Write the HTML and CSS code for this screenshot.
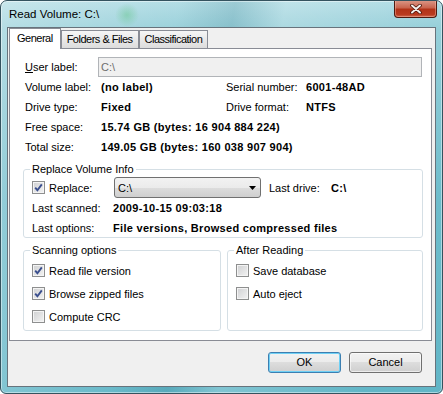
FILE: index.html
```html
<!DOCTYPE html>
<html lang="en">
<head>
    <meta charset="UTF-8">
    <title>Read Volume: C:\</title>
    <link rel="stylesheet" href="styles.css">
</head>
<body>
    <div class="window">
        <div class="titlebar">
            <span class="title">Read Volume: C:\</span>
            <div class="close-btn">
                <svg width="14" height="10" viewBox="0 0 14 10">
                    <path d="M3 1.5 L11 8.5 M11 1.5 L3 8.5" stroke="#4a1309" stroke-width="3.6" stroke-linecap="round"/>
                    <path d="M3 1.5 L11 8.5 M11 1.5 L3 8.5" stroke="#f4f0ee" stroke-width="2" stroke-linecap="round"/>
                </svg>
            </div>
        </div>

        <div class="client">
            <div class="tabs">
                <div class="tab active">General</div>
                <div class="tab">Folders &amp; Files</div>
                <div class="tab">Classification</div>
            </div>

            <div class="panel">
                <div class="info">
                    <span><u>U</u>ser label:</span>
                    <div class="input">C:\</div>

                    <span>Volume label:</span>
                    <span class="b">(no label)</span>
                    <span>Serial number:</span>
                    <span class="b">6001-48AD</span>

                    <span>Drive type:</span>
                    <span class="b">Fixed</span>
                    <span>Drive format:</span>
                    <span class="b">NTFS</span>

                    <span>Free space:</span>
                    <span class="b wide">15.74 GB (bytes: 16 904 884 224)</span>

                    <span>Total size:</span>
                    <span class="b wide">149.05 GB (bytes: 160 038 907 904)</span>
                </div>

                <fieldset class="group">
                    <legend>Replace Volume Info</legend>
                    <div class="replace-grid">
                        <div class="check">
                            <span class="box checked"><svg width="11" height="11" viewBox="0 0 11 11"><path d="M2.2 5.6 L4.4 8.2 L8.8 2.4" fill="none" stroke="#3b4f8e" stroke-width="1.9"/></svg></span>
                            <span>Replace:</span>
                        </div>
                        <div class="combo">
                            <span>C:\</span>
                            <svg width="7" height="4" viewBox="0 0 7 4"><path d="M0 0 H7 L3.5 4 Z" fill="#000"/></svg>
                        </div>
                        <span class="pad-left">Last drive:</span>
                        <span class="b">C:\</span>

                        <span>Last scanned:</span>
                        <span class="b span">2009-10-15 09:03:18</span>

                        <span>Last options:</span>
                        <span class="b span">File versions, Browsed compressed files</span>
                    </div>
                </fieldset>

                <div class="options">
                    <fieldset class="group">
                        <legend>Scanning options</legend>
                        <div class="opt-list">
                            <div class="check">
                                <span class="box checked"><svg width="11" height="11" viewBox="0 0 11 11"><path d="M2.2 5.6 L4.4 8.2 L8.8 2.4" fill="none" stroke="#3b4f8e" stroke-width="1.9"/></svg></span>
                                <span>Read file version</span>
                            </div>
                            <div class="check">
                                <span class="box checked"><svg width="11" height="11" viewBox="0 0 11 11"><path d="M2.2 5.6 L4.4 8.2 L8.8 2.4" fill="none" stroke="#3b4f8e" stroke-width="1.9"/></svg></span>
                                <span>Browse zipped files</span>
                            </div>
                            <div class="check">
                                <span class="box"></span>
                                <span>Compute CRC</span>
                            </div>
                        </div>
                    </fieldset>
                    <fieldset class="group">
                        <legend>After Reading</legend>
                        <div class="opt-list">
                            <div class="check">
                                <span class="box"></span>
                                <span>Save database</span>
                            </div>
                            <div class="check">
                                <span class="box"></span>
                                <span>Auto eject</span>
                            </div>
                        </div>
                    </fieldset>
                </div>
            </div>

            <div class="buttons">
                <div class="btn default">OK</div>
                <div class="btn">Cancel</div>
            </div>
        </div>
    </div>
</body>
</html>
```

FILE: styles.css
```css
body { margin: 0; font-family: "Liberation Sans", Arial, sans-serif; font-size: 11px; color: #000; background: #fff; }

.window {
    width: 443px; height: 394px; box-sizing: border-box; overflow: hidden;
    border: 1px solid #34535f; border-radius: 7px 7px 6px 6px;
    box-shadow: inset 0 0 0 1px rgba(255,255,255,0.45);
    background:
        radial-gradient(circle at 126px 14px, rgba(110,200,150,0.55), rgba(110,200,150,0) 12px),
        linear-gradient(100deg, rgba(255,255,255,0.3) 0, rgba(255,255,255,0.05) 35%, rgba(20,80,100,0.12) 46%, rgba(255,255,255,0.2) 56%, rgba(255,255,255,0) 85%),
        linear-gradient(#b0dce4, #96cfd9 28px, #6dbccb 200px, #62b6c7);
}

.titlebar { height: 26px; display: flex; align-items: flex-start; }
.title { flex: 1; padding-left: 8px; font-size: 11.5px; line-height: 26px; }
.close-btn {
    width: 43px; height: 18px; margin-right: 5px; margin-top: -1px; box-sizing: border-box;
    border: 1px solid #4f1a10; border-top: none; border-radius: 0 0 4px 4px;
    background: linear-gradient(#dc9a8a, #c9654f 45%, #b23318 55%, #b93a1f 85%, #cf6a4f);
    box-shadow: inset 0 0 0 1px rgba(255,200,185,0.4);
    display: flex; align-items: center; justify-content: center;
}

.client { margin: 0 6px; border: 1px solid #67737c; background: #f0f0f0; padding: 0 3px 0 1px; }

.tabs { display: flex; align-items: flex-start; height: 20px; }
.tab {
    box-sizing: border-box; height: 18px; margin-top: 2px; padding: 0 5px;
    border: 1px solid #898c95; border-bottom: none;
    background: linear-gradient(#f6f6f6, #e9e9e9 50%, #dcdcdc);
    line-height: 17px; letter-spacing: -0.5px; white-space: nowrap;
}
.tab.active { position: relative; z-index: 1; height: 21px; margin-top: 0; padding: 0 7px; background: #fff; line-height: 18px; }

.panel { background: #fff; border: 1px solid #898c95; padding: 8px 8px 9px 13px; }

.info { display: grid; grid-template-columns: 76px 125px 80px auto; grid-auto-rows: 20px; align-items: center; padding-left: 2px; }
.info .input {
    grid-column: 2 / 5; margin: 0 1px 0 -3px; height: 20px; box-sizing: border-box;
    border: 1px solid #b1b4b8; background: #f0f0f0; color: #6d6d6d; padding-left: 2px; line-height: 18px;
}
.info .wide { grid-column: 2 / 5; }
.b { font-weight: bold; letter-spacing: 0.3px; white-space: nowrap; }

.group { margin: 5px 0 0; min-width: 0; border: 1px solid #d5dfe5; border-radius: 3px; padding: 0 8px; }
.group legend { padding: 0 2px; margin-left: -2px; line-height: 14px; }

.replace-grid { display: grid; grid-template-columns: 82px 147px 70px auto; grid-template-rows: 21px 20px 19px; align-items: center; padding-top: 1px; }
.replace-grid .span { grid-column: 2 / 5; margin-left: -1px; }
.pad-left { padding-left: 8px; }

.check { display: flex; align-items: center; gap: 4px; }
.box {
    width: 13px; height: 13px; box-sizing: border-box; flex: none;
    border: 1px solid #8e8f8f; background: linear-gradient(135deg, #cfd0d2, #f3f3f3);
    box-shadow: inset 0 0 0 1px #f4f4f4; display: flex; align-items: center; justify-content: center;
}

.combo {
    height: 21px; box-sizing: border-box; border: 1px solid #707070; border-radius: 3px;
    background: linear-gradient(#f2f2f2, #ebebeb 50%, #dddddd 50%, #cfcfcf);
    display: flex; align-items: center; justify-content: space-between; padding: 0 4px 0 3px;
}

.options { display: grid; grid-template-columns: 198px 1fr; column-gap: 6px; margin-top: 5px; }
.options .group { margin: 0; }
.opt-list { display: grid; grid-auto-rows: 23px; align-items: center; padding: 2px 0; }

.buttons { display: flex; justify-content: flex-end; gap: 8px; padding: 11px 10px 13px 0; }
.btn {
    width: 73px; height: 21px; box-sizing: border-box; border: 1px solid #707070; border-radius: 3px;
    background: linear-gradient(#f2f2f2, #ebebeb 50%, #dddddd 50%, #cfcfcf);
    box-shadow: inset 0 0 0 1px rgba(255,255,255,0.6);
    text-align: center; line-height: 19px;
}
.btn.default { border-color: #3c7fb1; box-shadow: inset 0 0 0 1px #6fd0f5; }
```
